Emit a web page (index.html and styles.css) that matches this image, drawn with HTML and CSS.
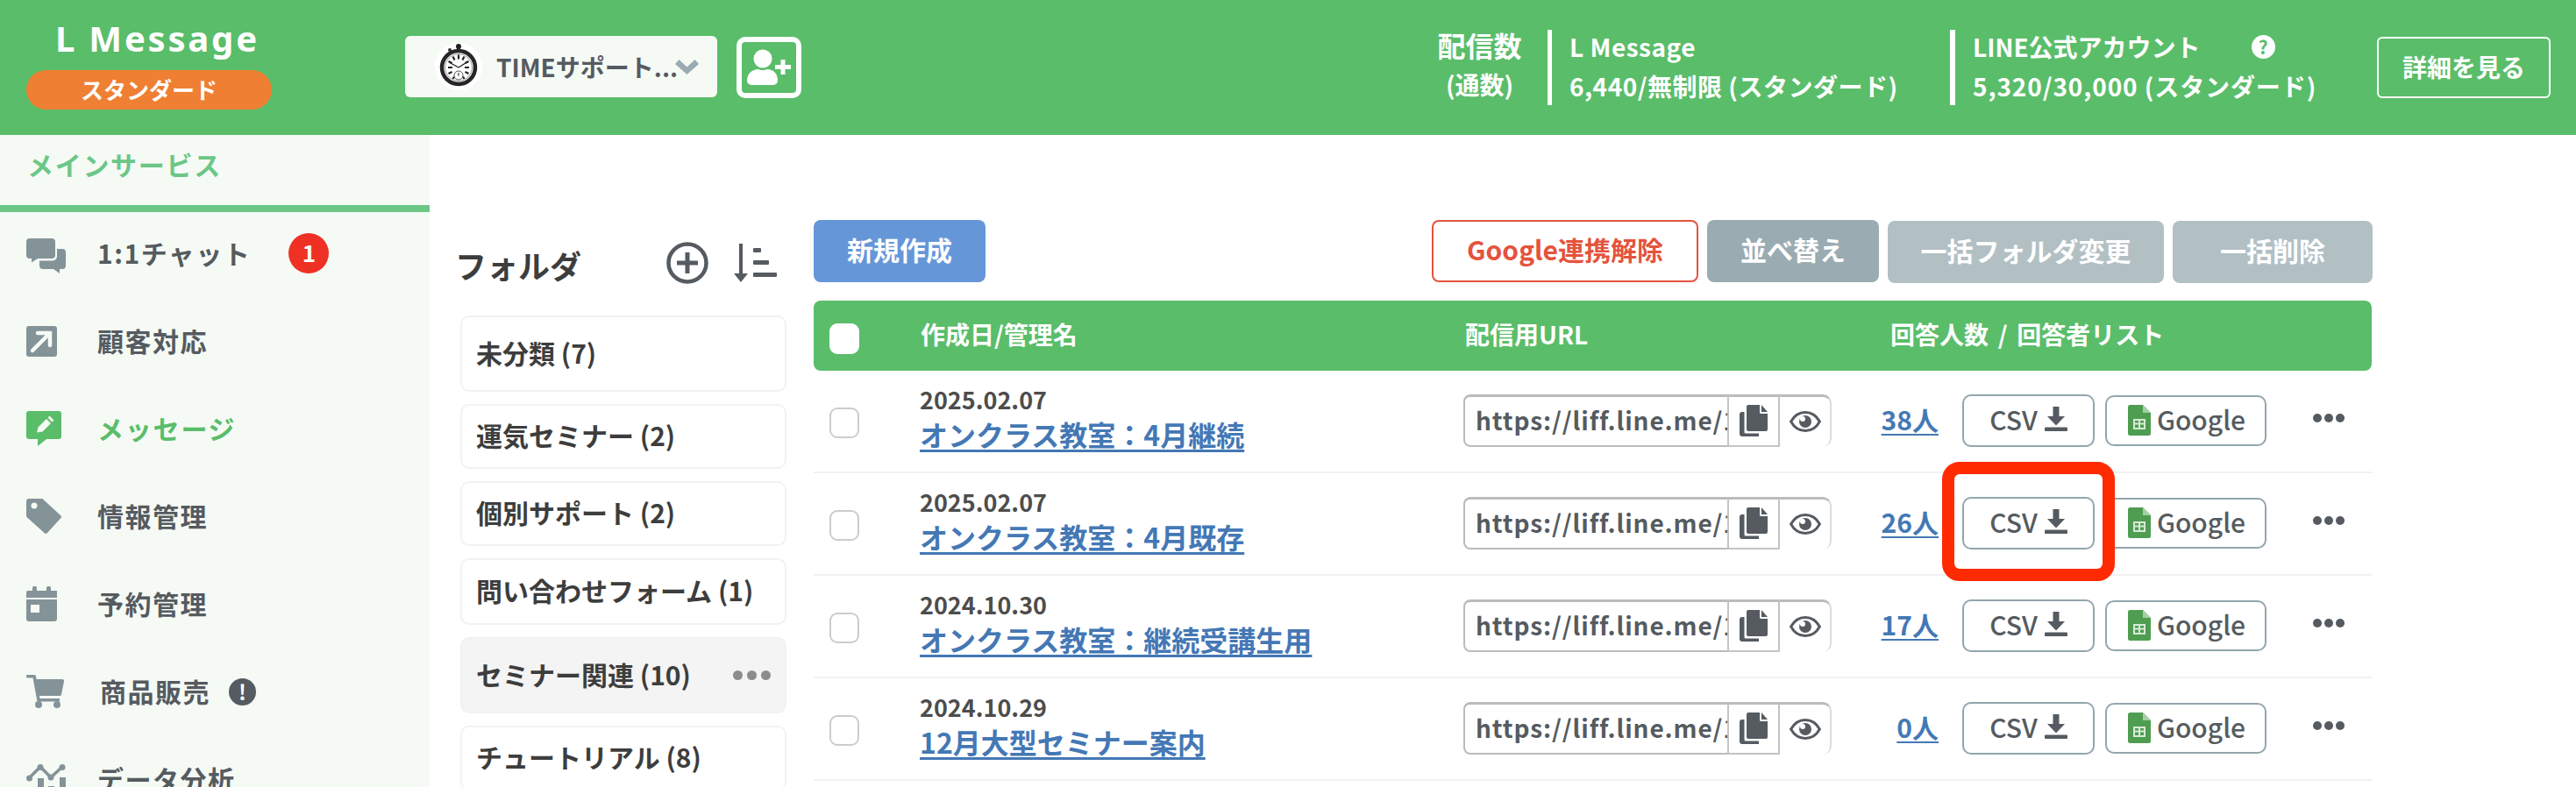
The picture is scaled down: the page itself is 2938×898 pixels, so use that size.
FILE: index.html
```html
<!DOCTYPE html>
<html lang="ja">
<head>
<meta charset="utf-8">
<title>L Message</title>
<link rel="stylesheet" href="styles.css">
</head>
<body>
<svg class="defs" width="0" height="0" aria-hidden="true">
  <symbol id="i-copy" viewBox="0 0 32 36">
    <path d="M10 0h13v8.500A1.500 1.500 0 0 0 24.500 10H32v18a2 2 0 0 1-2 2H10a2 2 0 0 1-2-2V2a2 2 0 0 1 2-2z"/>
    <path d="M25 0l7 8h-7z"/>
    <path d="M5.500 8v23a1.500 1.500 0 0 0 1.500 1.500h15V36H3a3 3 0 0 1-3-3V11a3 3 0 0 1 3-3z"/>
  </symbol>
  <symbol id="i-eye" viewBox="0 0 36 24">
    <path d="M1.600 12C5.500 5 11 1.500 18 1.500S30.500 5 34.400 12C30.500 19 25 22.500 18 22.500S5.500 19 1.600 12z" fill="none" stroke="currentColor" stroke-width="3"/>
    <circle cx="18" cy="12" r="7"/>
    <circle cx="15" cy="9" r="3" fill="#fff"/>
  </symbol>
  <symbol id="i-dl" viewBox="0 0 26 28">
    <path d="M9.500 0h7v11H23L13 21.500 3 11h6.500z"/>
    <rect y="23.500" width="26" height="4.500" rx="1"/>
  </symbol>
  <symbol id="i-sheet" viewBox="0 0 26 35">
    <path d="M2.500 0H17l9 9v23.500a2.500 2.500 0 0 1-2.500 2.500h-21A2.500 2.500 0 0 1 0 32.500v-30A2.500 2.500 0 0 1 2.500 0z" fill="#4f9d50"/>
    <path d="M17 0l9 9h-9z" fill="#a5cfa5"/>
    <path d="M6 16h14v12H6zM8 18v2.500h4V18zm6 0v2.500h4V18zm-6 4.500V26h4v-3.500zm6 0V26h4v-3.500z" fill="#d6ead6" fill-rule="evenodd"/>
  </symbol>
</svg>

<header class="topbar">
  <div class="brand">
    <div class="brand-name">L Message</div>
    <div class="plan">スタンダード</div>
  </div>
  <div class="account">
    <svg class="avatar" viewBox="0 0 54 54" aria-hidden="true">
      <circle cx="27" cy="27" r="27" fill="#fff"/>
      <circle cx="27" cy="4" r="3" fill="#222"/>
      <circle cx="17" cy="8" r="2" fill="#333"/>
      <rect x="25" y="5" width="4" height="5" fill="#222"/>
      <circle cx="27" cy="28" r="19" fill="#fff" stroke="#262626" stroke-width="4.500"/>
      <circle cx="27" cy="28" r="15.500" fill="none" stroke="#999" stroke-width="1"/>
      <path d="M27 13.500v5M15 28h5M34 28h5M20.500 15.500l2 4M33.500 15.500l-2 4M15.500 21l4 2M38.500 21l-4 2M15.500 35l4-2M38.500 35l-4-2M20.500 41l1.500-2.500M33.500 41L32 38.500" stroke="#222" stroke-width="2.200"/>
      <path d="M27 28l-10-5.500M27 28l11-7" stroke="#222" stroke-width="1.400"/>
      <circle cx="27" cy="37" r="5" fill="#fff" stroke="#555" stroke-width="1"/>
      <path d="M27 34v3.500" stroke="#333" stroke-width="1.200"/>
    </svg>
    <span class="account-name">TIMEサポート...</span>
    <svg class="chev" viewBox="0 0 27 17" aria-hidden="true"><path d="M0 5l4.500-5 9 8.500 9-8.500L27 5 13.500 17z"/></svg>
  </div>
  <div class="add-user">
    <svg viewBox="0 0 62 58" aria-hidden="true">
      <circle cx="24" cy="19" r="10.500" fill="#fff"/>
      <path d="M6 44c0-8 6-13 13-13 3 1.500 7 1.500 10 0 7 0 12 5 12 13a5 5 0 0 1-5 5H11a5 5 0 0 1-5-5z" fill="#fff"/>
      <path d="M44.500 20h5v6h6.500v5h-6.500v6h-5v-6H38v-5h6.500z" fill="#fff"/>
    </svg>
  </div>
  <div class="stats">
    <div class="stat-title"><span>配信数</span><small>(通数)</small></div>
    <div class="stat stat-lm">
      <div>L Message</div>
      <div>6,440/無制限 (スタンダード)</div>
    </div>
    <div class="stat stat-line">
      <div class="stat-line-head">LINE公式アカウント <span class="help">?</span></div>
      <div>5,320/30,000 (スタンダード)</div>
    </div>
    <a class="detail-btn">詳細を見る</a>
  </div>
</header>

<div class="layout">
  <aside class="sidebar">
    <div class="side-tab"><span>メインサービス</span></div>
    <nav class="nav">
      <div class="nav-item">
        <span class="nav-ic"><svg class="ic ic-low" width="45" height="40" viewBox="0 0 45 40"><path d="M4 0h25a4 4 0 0 1 4 4v15a4 4 0 0 1-4 4H13l-7 4.500V23H4a4 4 0 0 1-4-4V4a4 4 0 0 1 4-4z"/><path d="M35 12h6a4 4 0 0 1 4 4v15a4 4 0 0 1-4 4h-3v5l-7-5H19a4 4 0 0 1-4-4v-5.500h15a5 5 0 0 0 5-5z"/></svg></span>
        <span>1:1チャット</span><span class="count-badge">1</span>
      </div>
      <div class="nav-item">
        <span class="nav-ic"><svg class="ic" width="35" height="35" viewBox="0 0 35 35"><rect width="35" height="35" rx="3"/><path d="M7 28L26 9M13 8h14v14" fill="none" stroke="#f5faf5" stroke-width="4.500" stroke-linecap="round"/></svg></span>
        <span>顧客対応</span>
      </div>
      <div class="nav-item is-active">
        <span class="nav-ic"><svg class="ic" width="40" height="40" viewBox="0 0 40 40"><path d="M3 0h34a3 3 0 0 1 3 3v26a3 3 0 0 1-3 3H23l-10 8v-8H3a3 3 0 0 1-3-3V3a3 3 0 0 1 3-3z"/><path d="M12 24.500l1.500-6L23 9l5 5-9.500 9.500zM24.500 7.500l2-2 5 5-2 2z" fill="#f5faf5"/></svg></span>
        <span>メッセージ</span>
      </div>
      <div class="nav-item">
        <span class="nav-ic"><svg class="ic" width="40" height="40" viewBox="0 0 40 40"><path d="M0 3a3 3 0 0 1 3-3h14.500a3 3 0 0 1 2 .900l19.500 18a2.500 2.500 0 0 1 0 3.700L24 39a2.500 2.500 0 0 1-3.500 0L1 21.500a3 3 0 0 1-1-2.200z"/><circle cx="9" cy="8" r="3.500" fill="#f5faf5"/></svg></span>
        <span>情報管理</span>
      </div>
      <div class="nav-item">
        <span class="nav-ic"><svg class="ic" width="35" height="40" viewBox="0 0 35 40"><rect x="7" width="5" height="8" rx="1.500"/><rect x="23" width="5" height="8" rx="1.500"/><path d="M2 5h33v8H0V7a2 2 0 0 1 2-2z"/><path d="M0 15h35v22a3 3 0 0 1-3 3H3a3 3 0 0 1-3-3zm5 6v9h10v-9z" fill-rule="evenodd"/></svg></span>
        <span>予約管理</span>
      </div>
      <div class="nav-item">
        <span class="nav-ic"><svg class="ic" width="43" height="38" viewBox="0 0 43 38"><path d="M1.500 0H9a2 2 0 0 1 2 1.500L11.500 5H41a2 2 0 0 1 2 2.500l-3 15a2 2 0 0 1-2 1.500H15l.6 3H38v3.500H12.500L7.500 3.500h-6a1.700 1.700 0 0 1 0-3.500z"/><circle cx="14" cy="34" r="4"/><circle cx="35" cy="34" r="4"/></svg></span>
        <span class="nudge">商品販売</span><span class="warn-badge">!</span>
      </div>
      <div class="nav-item">
        <span class="nav-ic"><svg class="ic ic-low" width="45" height="40" viewBox="0 0 45 40"><path d="M3 16L16 3l12 12L41 3" fill="none" stroke="#849397" stroke-width="3.500"/><circle cx="3.500" cy="16" r="3.500"/><circle cx="16" cy="3.500" r="3.500"/><circle cx="28" cy="15" r="3.500"/><circle cx="41" cy="3.500" r="3.500"/><rect x="13" y="16" width="7" height="24"/><rect x="25" y="25" width="7" height="15"/><rect x="38" y="15" width="7" height="25"/><rect y="28" width="7" height="12"/></svg></span>
        <span>データ分析</span>
      </div>
    </nav>
  </aside>

  <main class="content">
    <section class="folders">
      <div class="folders-head">
        <h2>フォルダ</h2>
        <svg class="plus" viewBox="0 0 48 48" aria-hidden="true"><circle cx="24" cy="24" r="21.500" fill="none" stroke="#555b60" stroke-width="4.500"/><path d="M24 12v24M12 24h24" stroke="#555b60" stroke-width="5"/></svg>
        <svg class="sort" viewBox="0 0 49 44" aria-hidden="true"><path d="M6 0h4v34h6L8 44 0 34h6z" fill="#555b60"/><rect x="22" y="5" width="9" height="5" rx="1" fill="#555b60"/><rect x="22" y="19" width="18" height="5" rx="1" fill="#555b60"/><rect x="22" y="33" width="27" height="5" rx="1" fill="#555b60"/></svg>
      </div>
      <ul class="folder-list">
        <li class="folder tall">未分類 (7)</li>
        <li class="folder">運気セミナー (2)</li>
        <li class="folder">個別サポート (2)</li>
        <li class="folder mid">問い合わせフォーム (1)</li>
        <li class="folder tall selected"><span>セミナー関連 (10)</span><span class="folder-dots"><i></i><i></i><i></i></span></li>
        <li class="folder">チュートリアル (8)</li>
      </ul>
    </section>

    <section class="forms">
      <div class="toolbar">
        <a class="btn btn-new">新規作成</a>
        <a class="btn btn-unlink">Google連携解除</a>
        <a class="btn btn-sort">並べ替え</a>
        <a class="btn btn-off btn-move">一括フォルダ変更</a>
        <a class="btn btn-off btn-del">一括削除</a>
      </div>

      <div class="thead grid">
        <span class="check check-head"></span>
        <span>作成日/管理名</span>
        <span>配信用URL</span>
        <span class="th-count">回答人数 &nbsp;/ &nbsp;回答者リスト</span>
      </div>

      <div class="row grid">
        <span class="check"></span>
        <div class="title-cell"><div class="date">2025.02.07</div><a class="title">オンクラス教室：4月継続</a></div>
        <div class="url"><span class="url-text">https://liff.line.me/1</span><span class="url-copy"><svg class="ic-dark copy"><use href="#i-copy"/></svg></span><span class="url-eye"><svg class="ic-dark eye"><use href="#i-eye"/></svg></span></div>
        <a class="num">38人</a>
        <a class="dlbtn csv">CSV<svg class="ic-dark dl"><use href="#i-dl"/></svg></a>
        <a class="dlbtn gg"><svg class="sheet"><use href="#i-sheet"/></svg>Google</a>
        <span class="more"><i></i><i></i><i></i></span>
      </div>

      <div class="row grid">
        <span class="check"></span>
        <div class="title-cell"><div class="date">2025.02.07</div><a class="title">オンクラス教室：4月既存</a></div>
        <div class="url"><span class="url-text">https://liff.line.me/1</span><span class="url-copy"><svg class="ic-dark copy"><use href="#i-copy"/></svg></span><span class="url-eye"><svg class="ic-dark eye"><use href="#i-eye"/></svg></span></div>
        <a class="num">26人</a>
        <div class="highlight-wrap"><a class="dlbtn csv">CSV<svg class="ic-dark dl"><use href="#i-dl"/></svg></a><span class="highlight"></span></div>
        <a class="dlbtn gg"><svg class="sheet"><use href="#i-sheet"/></svg>Google</a>
        <span class="more"><i></i><i></i><i></i></span>
      </div>

      <div class="row grid">
        <span class="check"></span>
        <div class="title-cell"><div class="date">2024.10.30</div><a class="title">オンクラス教室：継続受講生用</a></div>
        <div class="url"><span class="url-text">https://liff.line.me/1</span><span class="url-copy"><svg class="ic-dark copy"><use href="#i-copy"/></svg></span><span class="url-eye"><svg class="ic-dark eye"><use href="#i-eye"/></svg></span></div>
        <a class="num">17人</a>
        <a class="dlbtn csv">CSV<svg class="ic-dark dl"><use href="#i-dl"/></svg></a>
        <a class="dlbtn gg"><svg class="sheet"><use href="#i-sheet"/></svg>Google</a>
        <span class="more"><i></i><i></i><i></i></span>
      </div>

      <div class="row grid">
        <span class="check"></span>
        <div class="title-cell"><div class="date">2024.10.29</div><a class="title">12月大型セミナー案内</a></div>
        <div class="url"><span class="url-text">https://liff.line.me/1</span><span class="url-copy"><svg class="ic-dark copy"><use href="#i-copy"/></svg></span><span class="url-eye"><svg class="ic-dark eye"><use href="#i-eye"/></svg></span></div>
        <a class="num">0人</a>
        <a class="dlbtn csv">CSV<svg class="ic-dark dl"><use href="#i-dl"/></svg></a>
        <a class="dlbtn gg"><svg class="sheet"><use href="#i-sheet"/></svg>Google</a>
        <span class="more"><i></i><i></i><i></i></span>
      </div>
    </section>
  </main>
</div>
</body>
</html>
```
FILE: styles.css
```css
* { box-sizing: border-box; }
html, body { margin: 0; padding: 0; height: 898px; overflow: hidden; background: #fff; }
body {
  font-family: "Noto Sans CJK JP", "Noto Sans", sans-serif;
  font-weight: 700;
  color: #555b60;
}
.defs { position: absolute; }

/* header */
.topbar {
  height: 154px;
  background: #5abd6a;
  display: flex;
  align-items: flex-start;
  padding: 41px 29px 0 30px;
  color: #fff;
}
.brand { width: 280px; margin-top: -24px; display: flex; flex-direction: column; }
.brand-name {
  font-family: "Noto Sans", sans-serif;
  font-size: 40px;
  font-weight: 700;
  letter-spacing: 2.800px;
  line-height: 54px;
  padding-left: 33px;
  white-space: nowrap;
}
.plan {
  margin-top: 9px;
  height: 45px;
  border-radius: 23px;
  background: #ef7f32;
  font-size: 26px;
  line-height: 43px;
  text-align: center;
}
.account {
  margin-left: 152px;
  width: 356px;
  height: 70px;
  background: #f5faf5;
  border-radius: 6px;
  display: flex;
  align-items: center;
  padding-left: 34px;
  color: #555b60;
}
.avatar { width: 54px; height: 54px; flex: none; }
.account-name { margin-left: 16px; font-size: 28px; white-space: nowrap; width: 204px; font-weight: 700; }
.chev { width: 27px; height: 17px; fill: #9aabb1; margin-left: 0; flex: none; }
.add-user {
  margin-left: 22px;
  width: 74px;
  height: 70px;
  margin-top: 1px;
  border: 6px solid #fff;
  border-radius: 10px;
}
.add-user svg { display: block; width: 62px; height: 58px; }
.stats { margin-left: auto; display: flex; align-items: flex-start; margin-top: -7px; }
.stat-title {
  width: 97px;
  display: flex;
  flex-direction: column;
  align-items: center;
  font-size: 32px;
  line-height: 46px;
  margin-top: -6px;
  white-space: nowrap;
}
.stat-title small { font-size: 28px; line-height: 44px; }
.stat {
  border-left: 5px solid #fff;
  height: 86px;
  padding-left: 20px;
  font-size: 28px;
  line-height: 45px;
  white-space: nowrap;
  letter-spacing: .5px;
}
.stat > div { margin-top: -3px; margin-bottom: 3px; }
.stat-lm { margin-left: 29px; width: 459px; }
.stat-line { width: 487px; border-left-width: 6px; letter-spacing: .9px; }
.stat-line-head { display: flex; align-items: center; letter-spacing: 0; }
.help {
  width: 27px;
  height: 27px;
  margin-left: 58px;
  border-radius: 50%;
  background: #fff;
  color: #5abd6a;
  font-size: 21px;
  line-height: 27px;
  text-align: center;
}
.detail-btn {
  width: 198px;
  height: 70px;
  margin-top: 8px;
  border: 2px solid #fff;
  border-radius: 6px;
  font-size: 28px;
  line-height: 64px;
  text-align: center;
}

/* layout */
.layout { display: flex; height: 744px; overflow: hidden; }
.sidebar { width: 490px; flex: none; background: #f5faf5; }
.side-tab {
  height: 88px;
  border-bottom: 8px solid #6cc787;
  padding-left: 31px;
  color: #6cc787;
  font-size: 30px;
  line-height: 40px;
  padding-top: 13px;
  letter-spacing: 1.700px;
}
.nav-item {
  height: 100px;
  padding: 0 0 6px 30px;
  display: flex;
  align-items: center;
  font-size: 30px;
  letter-spacing: 1.500px;
  white-space: nowrap;
}
.nav-ic { width: 81px; flex: none; display: flex; align-items: center; }
.ic { fill: #849397; display: block; }
.ic-low { margin-top: 6px; }
.nav-item > span:not(.nav-ic):not(.count-badge):not(.warn-badge) { margin-top: -2px; }
.is-active { color: #5abd6a; letter-spacing: 1.800px; }
.is-active .ic { fill: #5abd6a; }
.nudge { margin-left: 3px; }
.count-badge {
  width: 46px;
  height: 46px;
  margin-left: 43px;
  border-radius: 50%;
  background: #ee3124;
  color: #fff;
  text-align: center;
  font-size: 26px;
  line-height: 44px;
  letter-spacing: 0;
}
.warn-badge {
  width: 31px;
  height: 31px;
  margin-left: 21px;
  border-radius: 50%;
  background: #555b60;
  color: #fff;
  text-align: center;
  font-size: 24px;
  line-height: 30px;
  letter-spacing: 0;
}

/* content */
.content { flex: 1; display: flex; padding: 97px 0 0 35px; }
.folders { width: 372px; flex: none; }
.folders-head { height: 109px; display: flex; align-items: flex-start; }
.folders-head h2 {
  margin: 30px 0 0 -6px;
  font-size: 36px;
  line-height: 42px;
  color: #3d3d3d;
  width: 241px;
}
.plus { width: 48px; height: 48px; margin-top: 25px; }
.sort { width: 49px; height: 44px; margin: 27px 0 0 29px; }
.folder-list { list-style: none; margin: 0; padding: 0; display: flex; flex-direction: column; gap: 14px; }
.folder {
  height: 74px;
  flex: none;
  border: 2px solid #f2f2f2;
  border-radius: 10px;
  padding: 0 16px 4px;
  display: flex;
  align-items: center;
  justify-content: space-between;
  font-size: 30px;
  color: #3d3d3d;
  white-space: nowrap;
}
.tall { height: 87px; }
.mid { height: 76px; }
.selected { background: #f4f4f4; }
.folder-dots { display: flex; gap: 5px; margin-top: 4px; }
.folder-dots i { width: 11px; height: 11px; border-radius: 50%; background: #8c8c8c; }

.forms { width: 1777px; margin-left: 31px; flex: none; }
.toolbar { display: flex; height: 72px; gap: 10px; margin-bottom: 20px; }
.btn {
  height: 71px;
  flex: none;
  border-radius: 8px;
  color: #fff;
  font-size: 30px;
  line-height: 66px;
  text-align: center;
  white-space: nowrap;
}
.btn-new { width: 196px; background: #6596d8; margin-right: 499px; }
.btn-unlink { width: 304px; background: #fff; color: #e5533d; border: 2px solid #e5533d; line-height: 62px; }
.btn-sort { width: 196px; background: #9aabb1; }
.btn-off { background: #b2c0c4; margin-top: 1px; }
.btn-move { width: 315px; }
.btn-del { width: 228px; }

.grid {
  display: grid;
  grid-template-columns: 121px 620px 420px 121px 28px 151px 12px 184px 53px 40px;
  align-items: center;
}
.thead {
  height: 80px;
  background: #5abd6a;
  border-radius: 8px;
  color: #fff;
  font-size: 28px;
}
.thead > span:nth-child(2) { grid-column: 2; margin-top: -4px; margin-left: 1px; }
.thead > span:nth-child(3) { grid-column: 3; margin-top: -4px; margin-left: 2px; }
.th-count { grid-column: 4 / 9; margin-left: 67px; margin-top: -4px; white-space: nowrap; word-spacing: -1px; }
.check {
  grid-column: 1;
  display: block;
  margin-left: 18px;
  width: 34px;
  height: 35px;
  border: 2px solid #ccc;
  border-radius: 9px;
  background: #fff;
}
.check-head { border-color: #fff; margin-top: 6px; }
.row {
  height: 117px;
  padding-bottom: 2px;
  border-bottom: 2px solid #f1f1f1;
}
.row:first-of-type { height: 115px; }
.row > .check { margin-top: 6px; }
.title-cell { margin-top: -6px; }
.date { font-size: 27px; line-height: 36px; color: #4d4d4d; font-weight: 700; }
.title {
  display: inline-block;
  font-size: 32px;
  line-height: 42px;
  color: #4478b5;
  text-decoration: underline;
  text-decoration-thickness: 3px;
  text-underline-offset: 4px;
  white-space: nowrap;
  font-weight: 700;
}
.url {
  grid-column: 3;
  width: 420px;
  height: 60px;
  display: flex;
  font-size: 28px;
  color: #555b60;
}
.url-text {
  width: 301px;
  flex: none;
  overflow: hidden;
  white-space: nowrap;
  padding-left: 12px;
  line-height: 52px;
  border: 2px solid #bbb;
  border-top-width: 3px;
  border-right: 0;
  border-radius: 8px 0 0 8px;
  font-weight: 700;
  letter-spacing: .9px;
}
.url-copy {
  width: 60px;
  flex: none;
  border: 2px solid #c4c4c4;
  border-top: 3px solid #bbb;
  display: flex;
  align-items: center;
  justify-content: center;
}
.url-eye {
  width: 59px;
  flex: none;
  border-top: 3px solid #bbb;
  border-right: 2px solid #dcdcdc;
  border-radius: 0 10px 10px 0;
  display: flex;
  align-items: center;
  justify-content: center;
}
.ic-dark { fill: #555b60; color: #555b60; display: block; }
.copy { width: 32px; height: 36px; }
.eye { width: 36px; height: 24px; }
.num {
  grid-column: 4;
  text-align: right;
  font-size: 30px;
  line-height: 40px;
  margin-top: -3px;
  margin-right: -1px;
  color: #4478b5;
  text-decoration: underline;
  text-decoration-thickness: 2px;
  text-underline-offset: 4px;
  font-weight: 700;
}
.dlbtn {
  height: 60px;
  display: flex;
  align-items: center;
  justify-content: center;
  border: 2px solid #92a5ad;
  border-radius: 10px;
  background: #fff;
  color: #555b60;
  font-size: 30px;
  line-height: 50px;
  padding-bottom: 4px;
  font-weight: 500;
}
.csv { grid-column: 6; width: 151px; gap: 8px; }
.gg { grid-column: 8; height: 58px; gap: 7px; padding-left: 2px; }
.dl { width: 26px; height: 28px; }
.sheet { width: 26px; height: 35px; margin-top: 4px; }
.highlight-wrap { grid-column: 6; position: relative; }
.highlight {
  position: absolute;
  left: -23px;
  top: -40px;
  width: 197px;
  height: 136px;
  border: 14px solid #ff2a00;
  border-radius: 20px;
}
.more { grid-column: 10; display: flex; gap: 3px; margin-top: -6px; }
.more i { width: 10px; height: 10px; border-radius: 50%; background: #555b60; flex: none; }
```
